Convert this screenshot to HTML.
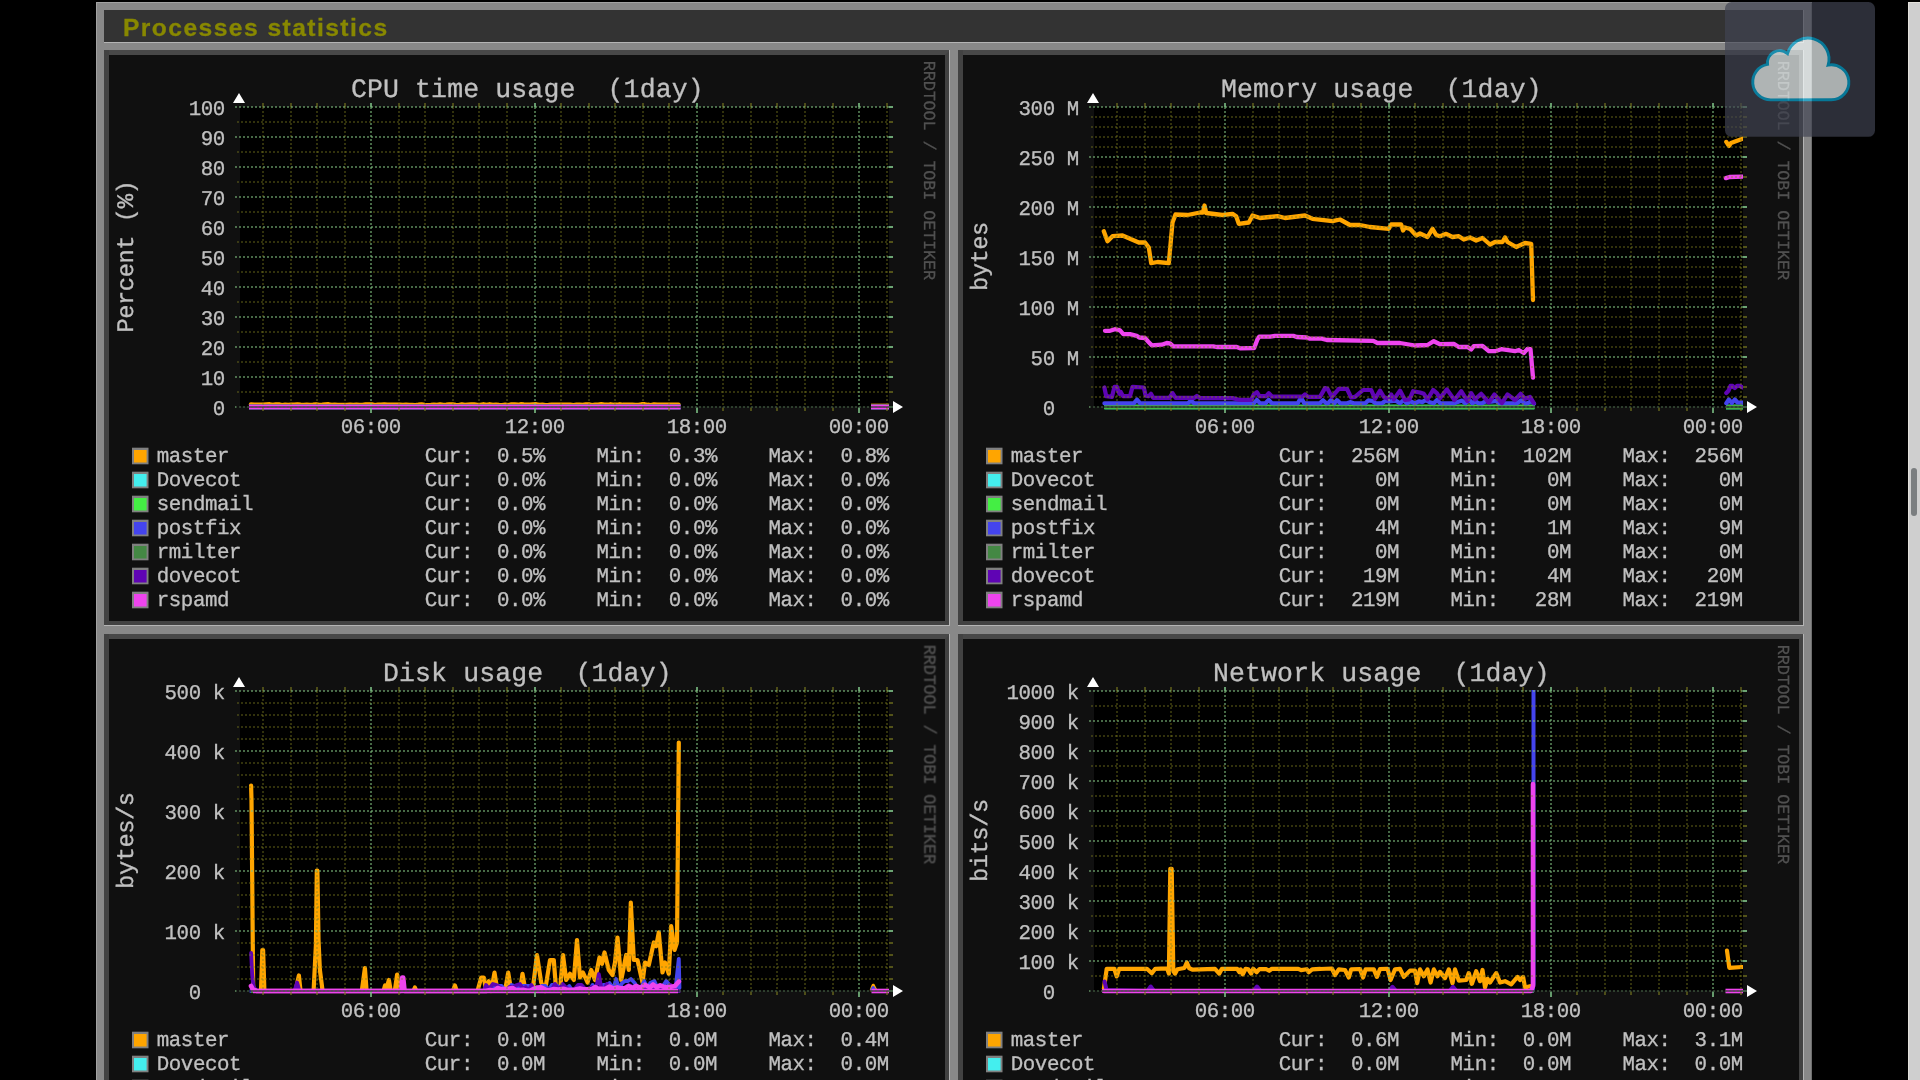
<!DOCTYPE html>
<html><head><meta charset="utf-8"><title>Processes statistics</title>
<style>
html,body{margin:0;padding:0;background:#000;width:1920px;height:1080px;overflow:hidden}
body{position:relative;font-family:"Liberation Sans", sans-serif}
#frame{position:absolute;left:96px;top:2px;width:1716px;height:1078px;background:#888;box-shadow:inset 1px 1px 0 #a2a2a2,inset -1px 0 0 #6e6e6e}
#tbar{position:absolute;left:104px;top:10px;width:1699px;height:32px;background:#333;border-right:1px solid #b4b4b4;border-bottom:1px solid #b4b4b4}
#ttl{position:absolute;left:122.8px;top:10.5px;will-change:transform;height:32px;line-height:32px;font:bold 24.6px "Liberation Sans", sans-serif;line-height:33px;color:#888800;white-space:nowrap;letter-spacing:1.45px;-webkit-text-stroke:.3px #888800}
svg{position:absolute;left:0;top:0;will-change:transform}
svg text{font-family:"Liberation Mono", monospace;white-space:pre;text-rendering:geometricPrecision;stroke-width:.3px;paint-order:stroke fill}
#sb{position:absolute;left:1908px;top:2px;width:12px;height:1078px;background:#cfcfcf;box-shadow:inset 1px 1px 0 #e4e2dc}
#th{position:absolute;left:1911px;top:468px;width:6px;height:48px;border-radius:3px;background:#7b7e80}
</style></head><body>
<div id="frame"></div>
<div id="tbar"></div>
<div id="ttl">Processes statistics</div>
<svg width="1920" height="1080" viewBox="0 0 1920 1080">
<defs><clipPath id="cv"><rect x="240" y="106" width="649" height="304"/></clipPath></defs>
<g transform="translate(0 0)">
<rect x="104" y="50" width="846" height="576" fill="#424242"/>
<path d="M104 50H950L945 55H109V50Z" fill="#484848"/>
<rect x="949" y="50" width="1" height="576" fill="#b4b4b4"/>
<rect x="104" y="625" width="846" height="1" fill="#b4b4b4"/>
<rect x="109" y="55" width="836" height="566" fill="#101010"/>
<rect x="240" y="107" width="649" height="300" fill="#000"/>
<g clip-path="url(#cv)">
<polyline points="251.0,404.6 254.1,404.8 257.2,404.7 260.3,404.9 263.4,404.9 266.5,404.5 269.6,404.4 272.7,405.1 275.8,404.6 278.9,404.6 282.0,405.2 285.1,404.8 288.2,405.1 291.3,404.8 294.4,404.9 297.5,404.5 300.6,404.9 303.7,405.1 306.8,404.8 309.9,405.0 313.0,404.9 316.1,404.5 319.2,405.0 322.3,404.9 325.4,404.6 328.5,404.4 331.6,405.1 334.7,404.8 337.8,405.0 340.9,405.1 344.0,405.0 347.1,405.1 350.2,404.7 353.3,405.0 356.4,404.8 359.5,405.1 362.6,405.1 365.7,404.5 368.8,404.5 371.9,404.6 375.0,405.2 378.1,404.7 381.2,404.9 384.3,404.6 387.4,404.8 390.5,404.7 393.6,404.7 396.7,404.9 399.8,404.9 402.9,405.1 406.0,404.9 409.1,405.1 412.2,405.1 415.3,405.2 418.4,404.9 421.5,404.5 424.6,405.1 427.7,405.2 430.8,405.1 433.9,404.9 437.0,405.0 440.1,404.6 443.2,405.1 446.3,404.9 449.4,404.6 452.5,404.5 455.6,405.1 458.7,405.2 461.8,404.5 464.9,405.0 468.0,404.7 471.1,404.5 474.2,404.6 477.3,405.0 480.4,405.1 483.5,404.4 486.6,404.9 489.7,404.4 492.8,405.0 495.9,404.7 499.0,405.1 502.1,405.2 505.2,404.8 508.3,405.2 511.4,404.6 514.5,404.5 517.6,404.9 520.7,404.4 523.8,404.6 526.9,404.7 530.0,404.9 533.1,404.5 536.2,404.4 539.3,405.1 542.4,404.7 545.5,405.2 548.6,405.1 551.7,404.7 554.8,404.8 557.9,404.8 561.0,404.9 564.1,404.9 567.2,404.8 570.3,404.9 573.4,405.2 576.5,404.8 579.6,404.7 582.7,405.0 585.8,404.6 588.9,404.6 592.0,405.2 595.1,404.8 598.2,404.8 601.3,404.4 604.4,404.7 607.5,404.9 610.6,404.4 613.7,404.9 616.8,404.9 619.9,404.4 623.0,404.9 626.1,404.8 629.2,404.9 632.3,404.7 635.4,405.0 638.5,405.0 641.6,404.4 644.7,404.4 647.8,404.9 650.9,405.2 654.0,404.6 657.1,404.8 660.2,404.9 663.3,404.7 666.4,404.7 669.5,404.7 672.6,404.7 675.7,404.9 678.5,404.8" fill="none" stroke="#FFA500" stroke-width="4.6" stroke-linejoin="round" stroke-linecap="round"/>
<polyline points="871.0,405.9 892.0,405.9" fill="none" stroke="#FFA500" stroke-width="4.5" stroke-linejoin="round" stroke-linecap="butt"/>
<polyline points="249.0,407.1 680.5,407.1" fill="none" stroke="#44EEEE" stroke-width="4.5" stroke-linejoin="round" stroke-linecap="butt"/>
<polyline points="871.0,407.0 892.0,407.0" fill="none" stroke="#44EEEE" stroke-width="4.5" stroke-linejoin="round" stroke-linecap="butt"/>
<polyline points="249.0,407.1 680.5,407.1" fill="none" stroke="#44EE44" stroke-width="4.5" stroke-linejoin="round" stroke-linecap="butt"/>
<polyline points="871.0,407.0 892.0,407.0" fill="none" stroke="#44EE44" stroke-width="4.5" stroke-linejoin="round" stroke-linecap="butt"/>
<polyline points="249.0,407.1 680.5,407.1" fill="none" stroke="#4444EE" stroke-width="4.5" stroke-linejoin="round" stroke-linecap="butt"/>
<polyline points="871.0,407.0 892.0,407.0" fill="none" stroke="#4444EE" stroke-width="4.5" stroke-linejoin="round" stroke-linecap="butt"/>
<polyline points="249.0,407.1 680.5,407.1" fill="none" stroke="#448844" stroke-width="4.5" stroke-linejoin="round" stroke-linecap="butt"/>
<polyline points="871.0,407.0 892.0,407.0" fill="none" stroke="#448844" stroke-width="4.5" stroke-linejoin="round" stroke-linecap="butt"/>
<polyline points="249.0,407.1 680.5,407.1" fill="none" stroke="#5F04B4" stroke-width="4.5" stroke-linejoin="round" stroke-linecap="butt"/>
<polyline points="871.0,407.0 892.0,407.0" fill="none" stroke="#5F04B4" stroke-width="4.5" stroke-linejoin="round" stroke-linecap="butt"/>
<polyline points="249.0,407.1 680.5,407.1" fill="none" stroke="#EE44EE" stroke-width="4.5" stroke-linejoin="round" stroke-linecap="butt"/>
<polyline points="871.0,407.0 892.0,407.0" fill="none" stroke="#EE44EE" stroke-width="4.5" stroke-linejoin="round" stroke-linecap="butt"/>
</g>
<g shape-rendering="crispEdges" stroke-width="2">
<path d="M237 122H889" stroke="rgba(128,128,32,0.38)" stroke-dasharray="2 2"/>
<path d="M889 122H893" stroke="#80801f" stroke-opacity=".6"/>
<path d="M237 152H889" stroke="rgba(128,128,32,0.38)" stroke-dasharray="2 2"/>
<path d="M889 152H893" stroke="#80801f" stroke-opacity=".6"/>
<path d="M237 182H889" stroke="rgba(128,128,32,0.38)" stroke-dasharray="2 2"/>
<path d="M889 182H893" stroke="#80801f" stroke-opacity=".6"/>
<path d="M237 212H889" stroke="rgba(128,128,32,0.38)" stroke-dasharray="2 2"/>
<path d="M889 212H893" stroke="#80801f" stroke-opacity=".6"/>
<path d="M237 242H889" stroke="rgba(128,128,32,0.38)" stroke-dasharray="2 2"/>
<path d="M889 242H893" stroke="#80801f" stroke-opacity=".6"/>
<path d="M237 272H889" stroke="rgba(128,128,32,0.38)" stroke-dasharray="2 2"/>
<path d="M889 272H893" stroke="#80801f" stroke-opacity=".6"/>
<path d="M237 302H889" stroke="rgba(128,128,32,0.38)" stroke-dasharray="2 2"/>
<path d="M889 302H893" stroke="#80801f" stroke-opacity=".6"/>
<path d="M237 332H889" stroke="rgba(128,128,32,0.38)" stroke-dasharray="2 2"/>
<path d="M889 332H893" stroke="#80801f" stroke-opacity=".6"/>
<path d="M237 362H889" stroke="rgba(128,128,32,0.38)" stroke-dasharray="2 2"/>
<path d="M889 362H893" stroke="#80801f" stroke-opacity=".6"/>
<path d="M237 392H889" stroke="rgba(128,128,32,0.38)" stroke-dasharray="2 2"/>
<path d="M889 392H893" stroke="#80801f" stroke-opacity=".6"/>
<path d="M263 107V407" stroke="rgba(128,128,32,0.38)" stroke-dasharray="2 2"/>
<path d="M263 103V107M263 407V411" stroke="#80801f" stroke-opacity="0.55"/>
<path d="M291 107V407" stroke="rgba(128,128,32,0.38)" stroke-dasharray="2 2"/>
<path d="M291 103V107M291 407V411" stroke="#80801f" stroke-opacity="0.55"/>
<path d="M317 107V407" stroke="rgba(128,128,32,0.38)" stroke-dasharray="2 2"/>
<path d="M317 103V107M317 407V411" stroke="#80801f" stroke-opacity="0.55"/>
<path d="M345 107V407" stroke="rgba(128,128,32,0.38)" stroke-dasharray="2 2"/>
<path d="M345 103V107M345 407V411" stroke="#80801f" stroke-opacity="0.55"/>
<path d="M371 107V407" stroke="rgba(128,192,128,0.55)" stroke-dasharray="2 2"/>
<path d="M371 103V107M371 407V413" stroke="#7cbf85" stroke-opacity="0.8"/>
<path d="M399 107V407" stroke="rgba(128,128,32,0.38)" stroke-dasharray="2 2"/>
<path d="M399 103V107M399 407V411" stroke="#80801f" stroke-opacity="0.55"/>
<path d="M425 107V407" stroke="rgba(128,128,32,0.38)" stroke-dasharray="2 2"/>
<path d="M425 103V107M425 407V411" stroke="#80801f" stroke-opacity="0.55"/>
<path d="M453 107V407" stroke="rgba(128,128,32,0.38)" stroke-dasharray="2 2"/>
<path d="M453 103V107M453 407V411" stroke="#80801f" stroke-opacity="0.55"/>
<path d="M479 107V407" stroke="rgba(128,128,32,0.38)" stroke-dasharray="2 2"/>
<path d="M479 103V107M479 407V411" stroke="#80801f" stroke-opacity="0.55"/>
<path d="M507 107V407" stroke="rgba(128,128,32,0.38)" stroke-dasharray="2 2"/>
<path d="M507 103V107M507 407V411" stroke="#80801f" stroke-opacity="0.55"/>
<path d="M535 107V407" stroke="rgba(128,192,128,0.55)" stroke-dasharray="2 2"/>
<path d="M535 103V107M535 407V413" stroke="#7cbf85" stroke-opacity="0.8"/>
<path d="M561 107V407" stroke="rgba(128,128,32,0.38)" stroke-dasharray="2 2"/>
<path d="M561 103V107M561 407V411" stroke="#80801f" stroke-opacity="0.55"/>
<path d="M589 107V407" stroke="rgba(128,128,32,0.38)" stroke-dasharray="2 2"/>
<path d="M589 103V107M589 407V411" stroke="#80801f" stroke-opacity="0.55"/>
<path d="M615 107V407" stroke="rgba(128,128,32,0.38)" stroke-dasharray="2 2"/>
<path d="M615 103V107M615 407V411" stroke="#80801f" stroke-opacity="0.55"/>
<path d="M643 107V407" stroke="rgba(128,128,32,0.38)" stroke-dasharray="2 2"/>
<path d="M643 103V107M643 407V411" stroke="#80801f" stroke-opacity="0.55"/>
<path d="M669 107V407" stroke="rgba(128,128,32,0.38)" stroke-dasharray="2 2"/>
<path d="M669 103V107M669 407V411" stroke="#80801f" stroke-opacity="0.55"/>
<path d="M697 107V407" stroke="rgba(128,192,128,0.55)" stroke-dasharray="2 2"/>
<path d="M697 103V107M697 407V413" stroke="#7cbf85" stroke-opacity="0.8"/>
<path d="M723 107V407" stroke="rgba(128,128,32,0.38)" stroke-dasharray="2 2"/>
<path d="M723 103V107M723 407V411" stroke="#80801f" stroke-opacity="0.55"/>
<path d="M751 107V407" stroke="rgba(128,128,32,0.38)" stroke-dasharray="2 2"/>
<path d="M751 103V107M751 407V411" stroke="#80801f" stroke-opacity="0.55"/>
<path d="M777 107V407" stroke="rgba(128,128,32,0.38)" stroke-dasharray="2 2"/>
<path d="M777 103V107M777 407V411" stroke="#80801f" stroke-opacity="0.55"/>
<path d="M805 107V407" stroke="rgba(128,128,32,0.38)" stroke-dasharray="2 2"/>
<path d="M805 103V107M805 407V411" stroke="#80801f" stroke-opacity="0.55"/>
<path d="M833 107V407" stroke="rgba(128,128,32,0.38)" stroke-dasharray="2 2"/>
<path d="M833 103V107M833 407V411" stroke="#80801f" stroke-opacity="0.55"/>
<path d="M859 107V407" stroke="rgba(128,192,128,0.55)" stroke-dasharray="2 2"/>
<path d="M859 103V107M859 407V413" stroke="#7cbf85" stroke-opacity="0.8"/>
<path d="M887 107V407" stroke="rgba(128,128,32,0.38)" stroke-dasharray="2 2"/>
<path d="M887 103V107M887 407V411" stroke="#80801f" stroke-opacity="0.55"/>
<path d="M235 107H889" stroke="rgba(128,192,128,0.55)" stroke-dasharray="2 2"/>
<path d="M889 107H893" stroke="#7cbf85" stroke-opacity=".85"/>
<path d="M235 137H889" stroke="rgba(128,192,128,0.55)" stroke-dasharray="2 2"/>
<path d="M889 137H893" stroke="#7cbf85" stroke-opacity=".85"/>
<path d="M235 167H889" stroke="rgba(128,192,128,0.55)" stroke-dasharray="2 2"/>
<path d="M889 167H893" stroke="#7cbf85" stroke-opacity=".85"/>
<path d="M235 197H889" stroke="rgba(128,192,128,0.55)" stroke-dasharray="2 2"/>
<path d="M889 197H893" stroke="#7cbf85" stroke-opacity=".85"/>
<path d="M235 227H889" stroke="rgba(128,192,128,0.55)" stroke-dasharray="2 2"/>
<path d="M889 227H893" stroke="#7cbf85" stroke-opacity=".85"/>
<path d="M235 257H889" stroke="rgba(128,192,128,0.55)" stroke-dasharray="2 2"/>
<path d="M889 257H893" stroke="#7cbf85" stroke-opacity=".85"/>
<path d="M235 287H889" stroke="rgba(128,192,128,0.55)" stroke-dasharray="2 2"/>
<path d="M889 287H893" stroke="#7cbf85" stroke-opacity=".85"/>
<path d="M235 317H889" stroke="rgba(128,192,128,0.55)" stroke-dasharray="2 2"/>
<path d="M889 317H893" stroke="#7cbf85" stroke-opacity=".85"/>
<path d="M235 347H889" stroke="rgba(128,192,128,0.55)" stroke-dasharray="2 2"/>
<path d="M889 347H893" stroke="#7cbf85" stroke-opacity=".85"/>
<path d="M235 377H889" stroke="rgba(128,192,128,0.55)" stroke-dasharray="2 2"/>
<path d="M889 377H893" stroke="#7cbf85" stroke-opacity=".85"/>
<path d="M235 407H889" stroke="rgba(128,192,128,0.55)" stroke-dasharray="2 2"/>
<path d="M889 407H893" stroke="#7cbf85" stroke-opacity=".85"/>
</g>
<rect x="236" y="406" width="657" height="2" fill="#101010" fill-opacity=".5"/>
<path d="M233 103H245L239 93Z M893 401V413L903 407Z" fill="#fff"/>
<text x="350.93" y="97.40" font-size="26.50" letter-spacing="0.137" fill="#c0c0c0" stroke="#c0c0c0">CPU time usage  (1day)</text>
<text transform="translate(133.00 256.40) rotate(-90)" x="-76.12" y="0" font-size="23.74" letter-spacing="-0.449" fill="#c0c0c0" stroke="#c0c0c0">Percent (%)</text>
<text transform="translate(924.40 170.50) rotate(90)" x="-109.76" y="0" font-size="16.90" letter-spacing="-0.172" fill="#505050" stroke="#505050">RRDTOOL / TOBI OETIKER</text>
<text x="188.66" y="115.30" font-size="20.80" letter-spacing="-0.442" fill="#c0c0c0" stroke="#c0c0c0">100</text>
<text x="200.70" y="145.30" font-size="20.80" letter-spacing="-0.442" fill="#c0c0c0" stroke="#c0c0c0">90</text>
<text x="200.70" y="175.30" font-size="20.80" letter-spacing="-0.442" fill="#c0c0c0" stroke="#c0c0c0">80</text>
<text x="200.70" y="205.30" font-size="20.80" letter-spacing="-0.442" fill="#c0c0c0" stroke="#c0c0c0">70</text>
<text x="200.70" y="235.30" font-size="20.80" letter-spacing="-0.442" fill="#c0c0c0" stroke="#c0c0c0">60</text>
<text x="200.70" y="265.30" font-size="20.80" letter-spacing="-0.442" fill="#c0c0c0" stroke="#c0c0c0">50</text>
<text x="200.70" y="295.30" font-size="20.80" letter-spacing="-0.442" fill="#c0c0c0" stroke="#c0c0c0">40</text>
<text x="200.70" y="325.30" font-size="20.80" letter-spacing="-0.442" fill="#c0c0c0" stroke="#c0c0c0">30</text>
<text x="200.70" y="355.30" font-size="20.80" letter-spacing="-0.442" fill="#c0c0c0" stroke="#c0c0c0">20</text>
<text x="200.70" y="385.30" font-size="20.80" letter-spacing="-0.442" fill="#c0c0c0" stroke="#c0c0c0">10</text>
<text x="212.74" y="415.30" font-size="20.80" letter-spacing="-0.442" fill="#c0c0c0" stroke="#c0c0c0">0</text>
<text x="340.68" y="432.90" font-size="20.80" letter-spacing="-0.442" fill="#c0c0c0" stroke="#c0c0c0">06:00</text>
<text x="504.68" y="432.90" font-size="20.80" letter-spacing="-0.442" fill="#c0c0c0" stroke="#c0c0c0">12:00</text>
<text x="666.68" y="432.90" font-size="20.80" letter-spacing="-0.442" fill="#c0c0c0" stroke="#c0c0c0">18:00</text>
<text x="828.68" y="432.90" font-size="20.80" letter-spacing="-0.442" fill="#c0c0c0" stroke="#c0c0c0">00:00</text>
<rect x="132" y="447.7" width="16.5" height="16.6" fill="#808080"/>
<rect x="134" y="450" width="12.6" height="12.5" fill="#FFA500"/>
<text x="156.78" y="462.20" font-size="20.80" letter-spacing="-0.442" fill="#c0c0c0" stroke="#c0c0c0">master</text>
<text x="424.78" y="462.20" font-size="20.80" letter-spacing="-0.442" fill="#c0c0c0" stroke="#c0c0c0">Cur:  0.5%</text>
<text x="596.58" y="462.20" font-size="20.80" letter-spacing="-0.442" fill="#c0c0c0" stroke="#c0c0c0">Min:  0.3%</text>
<text x="768.38" y="462.20" font-size="20.80" letter-spacing="-0.442" fill="#c0c0c0" stroke="#c0c0c0">Max:  0.8%</text>
<rect x="132" y="471.7" width="16.5" height="16.6" fill="#808080"/>
<rect x="134" y="474" width="12.6" height="12.5" fill="#44EEEE"/>
<text x="156.78" y="486.20" font-size="20.80" letter-spacing="-0.442" fill="#c0c0c0" stroke="#c0c0c0">Dovecot</text>
<text x="424.78" y="486.20" font-size="20.80" letter-spacing="-0.442" fill="#c0c0c0" stroke="#c0c0c0">Cur:  0.0%</text>
<text x="596.58" y="486.20" font-size="20.80" letter-spacing="-0.442" fill="#c0c0c0" stroke="#c0c0c0">Min:  0.0%</text>
<text x="768.38" y="486.20" font-size="20.80" letter-spacing="-0.442" fill="#c0c0c0" stroke="#c0c0c0">Max:  0.0%</text>
<rect x="132" y="495.7" width="16.5" height="16.6" fill="#808080"/>
<rect x="134" y="498" width="12.6" height="12.5" fill="#44EE44"/>
<text x="156.78" y="510.20" font-size="20.80" letter-spacing="-0.442" fill="#c0c0c0" stroke="#c0c0c0">sendmail</text>
<text x="424.78" y="510.20" font-size="20.80" letter-spacing="-0.442" fill="#c0c0c0" stroke="#c0c0c0">Cur:  0.0%</text>
<text x="596.58" y="510.20" font-size="20.80" letter-spacing="-0.442" fill="#c0c0c0" stroke="#c0c0c0">Min:  0.0%</text>
<text x="768.38" y="510.20" font-size="20.80" letter-spacing="-0.442" fill="#c0c0c0" stroke="#c0c0c0">Max:  0.0%</text>
<rect x="132" y="519.7" width="16.5" height="16.6" fill="#808080"/>
<rect x="134" y="522" width="12.6" height="12.5" fill="#4444EE"/>
<text x="156.78" y="534.20" font-size="20.80" letter-spacing="-0.442" fill="#c0c0c0" stroke="#c0c0c0">postfix</text>
<text x="424.78" y="534.20" font-size="20.80" letter-spacing="-0.442" fill="#c0c0c0" stroke="#c0c0c0">Cur:  0.0%</text>
<text x="596.58" y="534.20" font-size="20.80" letter-spacing="-0.442" fill="#c0c0c0" stroke="#c0c0c0">Min:  0.0%</text>
<text x="768.38" y="534.20" font-size="20.80" letter-spacing="-0.442" fill="#c0c0c0" stroke="#c0c0c0">Max:  0.0%</text>
<rect x="132" y="543.7" width="16.5" height="16.6" fill="#808080"/>
<rect x="134" y="546" width="12.6" height="12.5" fill="#448844"/>
<text x="156.78" y="558.20" font-size="20.80" letter-spacing="-0.442" fill="#c0c0c0" stroke="#c0c0c0">rmilter</text>
<text x="424.78" y="558.20" font-size="20.80" letter-spacing="-0.442" fill="#c0c0c0" stroke="#c0c0c0">Cur:  0.0%</text>
<text x="596.58" y="558.20" font-size="20.80" letter-spacing="-0.442" fill="#c0c0c0" stroke="#c0c0c0">Min:  0.0%</text>
<text x="768.38" y="558.20" font-size="20.80" letter-spacing="-0.442" fill="#c0c0c0" stroke="#c0c0c0">Max:  0.0%</text>
<rect x="132" y="567.7" width="16.5" height="16.6" fill="#808080"/>
<rect x="134" y="570" width="12.6" height="12.5" fill="#5F04B4"/>
<text x="156.78" y="582.20" font-size="20.80" letter-spacing="-0.442" fill="#c0c0c0" stroke="#c0c0c0">dovecot</text>
<text x="424.78" y="582.20" font-size="20.80" letter-spacing="-0.442" fill="#c0c0c0" stroke="#c0c0c0">Cur:  0.0%</text>
<text x="596.58" y="582.20" font-size="20.80" letter-spacing="-0.442" fill="#c0c0c0" stroke="#c0c0c0">Min:  0.0%</text>
<text x="768.38" y="582.20" font-size="20.80" letter-spacing="-0.442" fill="#c0c0c0" stroke="#c0c0c0">Max:  0.0%</text>
<rect x="132" y="591.7" width="16.5" height="16.6" fill="#808080"/>
<rect x="134" y="594" width="12.6" height="12.5" fill="#EE44EE"/>
<text x="156.78" y="606.20" font-size="20.80" letter-spacing="-0.442" fill="#c0c0c0" stroke="#c0c0c0">rspamd</text>
<text x="424.78" y="606.20" font-size="20.80" letter-spacing="-0.442" fill="#c0c0c0" stroke="#c0c0c0">Cur:  0.0%</text>
<text x="596.58" y="606.20" font-size="20.80" letter-spacing="-0.442" fill="#c0c0c0" stroke="#c0c0c0">Min:  0.0%</text>
<text x="768.38" y="606.20" font-size="20.80" letter-spacing="-0.442" fill="#c0c0c0" stroke="#c0c0c0">Max:  0.0%</text>
</g>
<g transform="translate(854 0)">
<rect x="104" y="50" width="846" height="576" fill="#424242"/>
<path d="M104 50H950L945 55H109V50Z" fill="#484848"/>
<rect x="949" y="50" width="1" height="576" fill="#b4b4b4"/>
<rect x="104" y="625" width="846" height="1" fill="#b4b4b4"/>
<rect x="109" y="55" width="836" height="566" fill="#101010"/>
<rect x="240" y="107" width="649" height="300" fill="#000"/>
<g clip-path="url(#cv)">
<polyline points="249.8,231.2 253.5,241.2 258.5,236.2 268.5,235.5 284.8,242.5 291.0,242.5 294.8,247.5 297.2,263.2 303.5,262.0 314.8,263.2 318.5,222.5 321.5,214.5 333.5,215.0 346.0,212.5 349.0,212.5 350.5,205.5 352.2,213.0 368.5,215.0 378.5,213.8 382.2,216.2 384.8,223.8 394.8,222.5 398.5,215.5 406.0,218.0 423.5,216.2 431.0,218.0 451.0,215.5 458.5,218.8 478.5,221.2 486.0,219.5 496.0,225.0 506.0,225.0 516.0,227.0 534.8,228.8 537.2,224.5 547.2,224.5 549.0,230.5 551.0,227.5 556.0,228.8 562.2,235.5 566.0,233.5 573.5,237.0 578.5,228.8 582.2,235.0 586.0,236.2 592.2,233.8 598.5,237.0 604.8,236.2 609.8,239.5 616.0,237.5 622.2,240.5 628.5,238.0 636.0,244.5 641.0,242.0 648.5,242.0 651.0,237.5 653.5,242.0 662.2,247.0 671.0,243.0 677.2,243.8 679.0,300.0" fill="none" stroke="#FFA500" stroke-width="4.3" stroke-linejoin="round" stroke-linecap="round"/>
<polyline points="872.3,141.9 874.9,145.9 877.0,143.0 887.9,138.9 892.0,137.6" fill="none" stroke="#FFA500" stroke-width="4.3" stroke-linejoin="round" stroke-linecap="round"/>
<polyline points="250.4,407.0 680.4,407.0" fill="none" stroke="#44EEEE" stroke-width="4.6" stroke-linejoin="round" stroke-linecap="butt"/>
<polyline points="872.0,407.0 892.0,407.0" fill="none" stroke="#44EEEE" stroke-width="4.6" stroke-linejoin="round" stroke-linecap="butt"/>
<polyline points="250.4,407.0 680.4,407.0" fill="none" stroke="#44EE44" stroke-width="4.6" stroke-linejoin="round" stroke-linecap="butt"/>
<polyline points="872.0,407.0 892.0,407.0" fill="none" stroke="#44EE44" stroke-width="4.6" stroke-linejoin="round" stroke-linecap="butt"/>
<polyline points="250.4,403.3 279.8,403.3 283.0,399.6 286.2,403.3 333.8,403.3 337.0,400.6 340.2,403.3 399.7,403.3 402.9,399.8 406.1,403.3 411.5,403.3 414.8,399.8 418.0,403.3 443.8,403.3 447.0,397.5 450.2,403.3 465.8,403.3 469.0,400.2 472.2,403.3 474.0,403.3 476.8,400.2 480.4,403.3 483.0,400.1 486.4,403.3 489.0,403.3 493.2,403.3 496.1,402.1 499.8,403.3 504.2,403.3 508.5,403.3 511.3,403.3 514.4,400.4 518.0,400.8 521.6,403.3 524.2,403.3 528.1,403.3 531.2,401.0 534.3,401.5 537.3,401.2 541.6,400.6 546.0,403.3 549.4,400.3 552.8,403.3 556.7,401.3 560.9,403.3 564.8,401.3 568.2,402.1 571.7,400.1 575.6,402.2 579.7,403.3 583.0,400.0 586.4,403.3 589.2,403.3 593.2,403.3 596.2,403.3 600.4,403.3 603.8,401.9 608.0,400.6 611.3,403.3 615.6,400.3 618.4,403.3 621.4,401.3 624.4,403.3 627.8,403.3 631.4,401.5 634.9,401.5 637.5,401.7 641.8,400.9 645.1,403.3 648.8,403.3 651.5,403.3 654.3,403.3 656.9,403.3 659.7,403.3 662.9,403.3 667.2,400.3 670.2,403.3 673.4,403.3 677.6,401.0 680.0,403.6" fill="none" stroke="#4444EE" stroke-width="4.2" stroke-linejoin="round" stroke-linecap="round"/>
<polyline points="872.3,403.3 874.9,399.5 877.8,403.0 880.8,399.5 883.5,402.5 892.0,402.8" fill="none" stroke="#4444EE" stroke-width="4.2" stroke-linejoin="round" stroke-linecap="round"/>
<polyline points="250.4,407.0 680.4,407.0" fill="none" stroke="#448844" stroke-width="3.2" stroke-linejoin="round" stroke-linecap="butt"/>
<polyline points="872.0,407.0 892.0,407.0" fill="none" stroke="#448844" stroke-width="3.2" stroke-linejoin="round" stroke-linecap="butt"/>
<polyline points="250.4,387.5 252.2,396.2 257.9,396.9 260.4,386.9 262.9,386.9 265.4,393.8 266.6,391.9 269.1,396.2 276.0,396.2 278.5,386.9 289.8,387.5 291.6,395.6 294.8,396.2 297.0,393.8 299.1,397.8 315.4,397.8 318.5,393.1 321.6,397.8 340.4,397.8 342.9,396.0 346.0,398.1 378.5,398.1 384.8,399.8 397.2,399.8 399.8,394.4 402.9,392.2 405.4,396.2 412.2,396.2 414.8,393.1 417.9,396.5 448.5,396.5 451.0,394.4 454.1,396.9 464.0,396.9 466.0,396.9 471.0,388.1 473.5,388.8 477.9,396.9 484.8,388.8 492.9,388.8 497.2,397.5 501.0,396.9 509.1,390.0 517.2,390.0 521.0,398.8 526.0,390.6 529.8,396.9 534.1,398.8 537.2,394.4 539.8,399.4 546.0,390.6 551.0,400.0 555.4,399.4 559.1,391.2 566.0,392.5 569.8,393.8 573.5,399.4 579.1,390.0 582.9,393.1 586.0,398.1 592.9,389.4 600.4,400.0 607.2,391.2 613.5,401.2 617.2,393.1 621.0,399.4 627.2,393.8 634.8,402.5 640.4,394.4 647.9,403.1 653.5,394.4 661.0,400.0 666.6,393.8 671.0,398.8 676.0,396.9 679.8,403.1" fill="none" stroke="#5F04B4" stroke-width="4.2" stroke-linejoin="round" stroke-linecap="round"/>
<polyline points="872.3,393.0 874.5,390.7 876.4,385.9 878.6,385.9 880.8,388.1 883.0,385.9 886.0,385.9 888.6,387.4 892.0,387.4" fill="none" stroke="#5F04B4" stroke-width="4.2" stroke-linejoin="round" stroke-linecap="round"/>
<polyline points="251.0,330.8 256.0,330.8 261.0,329.2 266.0,330.3 269.3,334.2 276.0,334.2 282.7,335.8 285.2,337.5 291.0,338.0 294.3,341.7 297.7,345.3 307.7,344.7 312.7,343.0 316.0,343.3 319.3,346.3 359.3,346.3 362.7,347.0 382.7,347.0 386.0,348.3 400.2,348.0 403.5,339.2 405.2,336.7 416.0,336.7 421.0,335.8 439.3,335.8 442.7,337.0 452.7,337.5 456.0,338.7 467.7,338.7 472.7,340.0 519.3,340.8 523.5,343.0 546.0,343.0 561.0,345.5 573.5,345.0 579.8,341.2 586.0,344.2 599.8,343.8 604.8,347.0 613.5,347.0 617.2,349.5 619.8,346.2 628.5,345.8 634.8,351.2 641.0,351.2 647.2,349.2 661.0,351.2 664.8,350.0 669.8,353.0 673.5,348.8 676.5,349.2 679.0,377.5" fill="none" stroke="#EE44EE" stroke-width="4.3" stroke-linejoin="round" stroke-linecap="round"/>
<polyline points="871.9,178.1 875.6,177.0 888.2,176.7 892.0,176.7" fill="none" stroke="#EE44EE" stroke-width="4.3" stroke-linejoin="round" stroke-linecap="round"/>
</g>
<g shape-rendering="crispEdges" stroke-width="2">
<path d="M237 117H889" stroke="rgba(128,128,32,0.38)" stroke-dasharray="2 2"/>
<path d="M889 117H893" stroke="#80801f" stroke-opacity=".6"/>
<path d="M237 127H889" stroke="rgba(128,128,32,0.38)" stroke-dasharray="2 2"/>
<path d="M889 127H893" stroke="#80801f" stroke-opacity=".6"/>
<path d="M237 137H889" stroke="rgba(128,128,32,0.38)" stroke-dasharray="2 2"/>
<path d="M889 137H893" stroke="#80801f" stroke-opacity=".6"/>
<path d="M237 147H889" stroke="rgba(128,128,32,0.38)" stroke-dasharray="2 2"/>
<path d="M889 147H893" stroke="#80801f" stroke-opacity=".6"/>
<path d="M237 167H889" stroke="rgba(128,128,32,0.38)" stroke-dasharray="2 2"/>
<path d="M889 167H893" stroke="#80801f" stroke-opacity=".6"/>
<path d="M237 177H889" stroke="rgba(128,128,32,0.38)" stroke-dasharray="2 2"/>
<path d="M889 177H893" stroke="#80801f" stroke-opacity=".6"/>
<path d="M237 187H889" stroke="rgba(128,128,32,0.38)" stroke-dasharray="2 2"/>
<path d="M889 187H893" stroke="#80801f" stroke-opacity=".6"/>
<path d="M237 197H889" stroke="rgba(128,128,32,0.38)" stroke-dasharray="2 2"/>
<path d="M889 197H893" stroke="#80801f" stroke-opacity=".6"/>
<path d="M237 217H889" stroke="rgba(128,128,32,0.38)" stroke-dasharray="2 2"/>
<path d="M889 217H893" stroke="#80801f" stroke-opacity=".6"/>
<path d="M237 227H889" stroke="rgba(128,128,32,0.38)" stroke-dasharray="2 2"/>
<path d="M889 227H893" stroke="#80801f" stroke-opacity=".6"/>
<path d="M237 237H889" stroke="rgba(128,128,32,0.38)" stroke-dasharray="2 2"/>
<path d="M889 237H893" stroke="#80801f" stroke-opacity=".6"/>
<path d="M237 247H889" stroke="rgba(128,128,32,0.38)" stroke-dasharray="2 2"/>
<path d="M889 247H893" stroke="#80801f" stroke-opacity=".6"/>
<path d="M237 267H889" stroke="rgba(128,128,32,0.38)" stroke-dasharray="2 2"/>
<path d="M889 267H893" stroke="#80801f" stroke-opacity=".6"/>
<path d="M237 277H889" stroke="rgba(128,128,32,0.38)" stroke-dasharray="2 2"/>
<path d="M889 277H893" stroke="#80801f" stroke-opacity=".6"/>
<path d="M237 287H889" stroke="rgba(128,128,32,0.38)" stroke-dasharray="2 2"/>
<path d="M889 287H893" stroke="#80801f" stroke-opacity=".6"/>
<path d="M237 297H889" stroke="rgba(128,128,32,0.38)" stroke-dasharray="2 2"/>
<path d="M889 297H893" stroke="#80801f" stroke-opacity=".6"/>
<path d="M237 317H889" stroke="rgba(128,128,32,0.38)" stroke-dasharray="2 2"/>
<path d="M889 317H893" stroke="#80801f" stroke-opacity=".6"/>
<path d="M237 327H889" stroke="rgba(128,128,32,0.38)" stroke-dasharray="2 2"/>
<path d="M889 327H893" stroke="#80801f" stroke-opacity=".6"/>
<path d="M237 337H889" stroke="rgba(128,128,32,0.38)" stroke-dasharray="2 2"/>
<path d="M889 337H893" stroke="#80801f" stroke-opacity=".6"/>
<path d="M237 347H889" stroke="rgba(128,128,32,0.38)" stroke-dasharray="2 2"/>
<path d="M889 347H893" stroke="#80801f" stroke-opacity=".6"/>
<path d="M237 367H889" stroke="rgba(128,128,32,0.38)" stroke-dasharray="2 2"/>
<path d="M889 367H893" stroke="#80801f" stroke-opacity=".6"/>
<path d="M237 377H889" stroke="rgba(128,128,32,0.38)" stroke-dasharray="2 2"/>
<path d="M889 377H893" stroke="#80801f" stroke-opacity=".6"/>
<path d="M237 387H889" stroke="rgba(128,128,32,0.38)" stroke-dasharray="2 2"/>
<path d="M889 387H893" stroke="#80801f" stroke-opacity=".6"/>
<path d="M237 397H889" stroke="rgba(128,128,32,0.38)" stroke-dasharray="2 2"/>
<path d="M889 397H893" stroke="#80801f" stroke-opacity=".6"/>
<path d="M263 107V407" stroke="rgba(128,128,32,0.38)" stroke-dasharray="2 2"/>
<path d="M263 103V107M263 407V411" stroke="#80801f" stroke-opacity="0.55"/>
<path d="M291 107V407" stroke="rgba(128,128,32,0.38)" stroke-dasharray="2 2"/>
<path d="M291 103V107M291 407V411" stroke="#80801f" stroke-opacity="0.55"/>
<path d="M317 107V407" stroke="rgba(128,128,32,0.38)" stroke-dasharray="2 2"/>
<path d="M317 103V107M317 407V411" stroke="#80801f" stroke-opacity="0.55"/>
<path d="M345 107V407" stroke="rgba(128,128,32,0.38)" stroke-dasharray="2 2"/>
<path d="M345 103V107M345 407V411" stroke="#80801f" stroke-opacity="0.55"/>
<path d="M371 107V407" stroke="rgba(128,192,128,0.55)" stroke-dasharray="2 2"/>
<path d="M371 103V107M371 407V413" stroke="#7cbf85" stroke-opacity="0.8"/>
<path d="M399 107V407" stroke="rgba(128,128,32,0.38)" stroke-dasharray="2 2"/>
<path d="M399 103V107M399 407V411" stroke="#80801f" stroke-opacity="0.55"/>
<path d="M425 107V407" stroke="rgba(128,128,32,0.38)" stroke-dasharray="2 2"/>
<path d="M425 103V107M425 407V411" stroke="#80801f" stroke-opacity="0.55"/>
<path d="M453 107V407" stroke="rgba(128,128,32,0.38)" stroke-dasharray="2 2"/>
<path d="M453 103V107M453 407V411" stroke="#80801f" stroke-opacity="0.55"/>
<path d="M479 107V407" stroke="rgba(128,128,32,0.38)" stroke-dasharray="2 2"/>
<path d="M479 103V107M479 407V411" stroke="#80801f" stroke-opacity="0.55"/>
<path d="M507 107V407" stroke="rgba(128,128,32,0.38)" stroke-dasharray="2 2"/>
<path d="M507 103V107M507 407V411" stroke="#80801f" stroke-opacity="0.55"/>
<path d="M535 107V407" stroke="rgba(128,192,128,0.55)" stroke-dasharray="2 2"/>
<path d="M535 103V107M535 407V413" stroke="#7cbf85" stroke-opacity="0.8"/>
<path d="M561 107V407" stroke="rgba(128,128,32,0.38)" stroke-dasharray="2 2"/>
<path d="M561 103V107M561 407V411" stroke="#80801f" stroke-opacity="0.55"/>
<path d="M589 107V407" stroke="rgba(128,128,32,0.38)" stroke-dasharray="2 2"/>
<path d="M589 103V107M589 407V411" stroke="#80801f" stroke-opacity="0.55"/>
<path d="M615 107V407" stroke="rgba(128,128,32,0.38)" stroke-dasharray="2 2"/>
<path d="M615 103V107M615 407V411" stroke="#80801f" stroke-opacity="0.55"/>
<path d="M643 107V407" stroke="rgba(128,128,32,0.38)" stroke-dasharray="2 2"/>
<path d="M643 103V107M643 407V411" stroke="#80801f" stroke-opacity="0.55"/>
<path d="M669 107V407" stroke="rgba(128,128,32,0.38)" stroke-dasharray="2 2"/>
<path d="M669 103V107M669 407V411" stroke="#80801f" stroke-opacity="0.55"/>
<path d="M697 107V407" stroke="rgba(128,192,128,0.55)" stroke-dasharray="2 2"/>
<path d="M697 103V107M697 407V413" stroke="#7cbf85" stroke-opacity="0.8"/>
<path d="M723 107V407" stroke="rgba(128,128,32,0.38)" stroke-dasharray="2 2"/>
<path d="M723 103V107M723 407V411" stroke="#80801f" stroke-opacity="0.55"/>
<path d="M751 107V407" stroke="rgba(128,128,32,0.38)" stroke-dasharray="2 2"/>
<path d="M751 103V107M751 407V411" stroke="#80801f" stroke-opacity="0.55"/>
<path d="M777 107V407" stroke="rgba(128,128,32,0.38)" stroke-dasharray="2 2"/>
<path d="M777 103V107M777 407V411" stroke="#80801f" stroke-opacity="0.55"/>
<path d="M805 107V407" stroke="rgba(128,128,32,0.38)" stroke-dasharray="2 2"/>
<path d="M805 103V107M805 407V411" stroke="#80801f" stroke-opacity="0.55"/>
<path d="M833 107V407" stroke="rgba(128,128,32,0.38)" stroke-dasharray="2 2"/>
<path d="M833 103V107M833 407V411" stroke="#80801f" stroke-opacity="0.55"/>
<path d="M859 107V407" stroke="rgba(128,192,128,0.55)" stroke-dasharray="2 2"/>
<path d="M859 103V107M859 407V413" stroke="#7cbf85" stroke-opacity="0.8"/>
<path d="M887 107V407" stroke="rgba(128,128,32,0.38)" stroke-dasharray="2 2"/>
<path d="M887 103V107M887 407V411" stroke="#80801f" stroke-opacity="0.55"/>
<path d="M235 107H889" stroke="rgba(128,192,128,0.55)" stroke-dasharray="2 2"/>
<path d="M889 107H893" stroke="#7cbf85" stroke-opacity=".85"/>
<path d="M235 157H889" stroke="rgba(128,192,128,0.55)" stroke-dasharray="2 2"/>
<path d="M889 157H893" stroke="#7cbf85" stroke-opacity=".85"/>
<path d="M235 207H889" stroke="rgba(128,192,128,0.55)" stroke-dasharray="2 2"/>
<path d="M889 207H893" stroke="#7cbf85" stroke-opacity=".85"/>
<path d="M235 257H889" stroke="rgba(128,192,128,0.55)" stroke-dasharray="2 2"/>
<path d="M889 257H893" stroke="#7cbf85" stroke-opacity=".85"/>
<path d="M235 307H889" stroke="rgba(128,192,128,0.55)" stroke-dasharray="2 2"/>
<path d="M889 307H893" stroke="#7cbf85" stroke-opacity=".85"/>
<path d="M235 357H889" stroke="rgba(128,192,128,0.55)" stroke-dasharray="2 2"/>
<path d="M889 357H893" stroke="#7cbf85" stroke-opacity=".85"/>
<path d="M235 407H889" stroke="rgba(128,192,128,0.55)" stroke-dasharray="2 2"/>
<path d="M889 407H893" stroke="#7cbf85" stroke-opacity=".85"/>
</g>
<rect x="236" y="406" width="657" height="2" fill="#101010" fill-opacity=".5"/>
<path d="M233 103H245L239 93Z M893 401V413L903 407Z" fill="#fff"/>
<text x="366.97" y="97.40" font-size="26.50" letter-spacing="0.137" fill="#c0c0c0" stroke="#c0c0c0">Memory usage  (1day)</text>
<text transform="translate(133.00 256.40) rotate(-90)" x="-34.72" y="0" font-size="23.74" letter-spacing="-0.449" fill="#c0c0c0" stroke="#c0c0c0">bytes</text>
<text transform="translate(924.40 170.50) rotate(90)" x="-109.76" y="0" font-size="16.90" letter-spacing="-0.172" fill="#505050" stroke="#505050">RRDTOOL / TOBI OETIKER</text>
<text x="164.58" y="115.30" font-size="20.80" letter-spacing="-0.442" fill="#c0c0c0" stroke="#c0c0c0">300 M</text>
<text x="164.58" y="165.30" font-size="20.80" letter-spacing="-0.442" fill="#c0c0c0" stroke="#c0c0c0">250 M</text>
<text x="164.58" y="215.30" font-size="20.80" letter-spacing="-0.442" fill="#c0c0c0" stroke="#c0c0c0">200 M</text>
<text x="164.58" y="265.30" font-size="20.80" letter-spacing="-0.442" fill="#c0c0c0" stroke="#c0c0c0">150 M</text>
<text x="164.58" y="315.30" font-size="20.80" letter-spacing="-0.442" fill="#c0c0c0" stroke="#c0c0c0">100 M</text>
<text x="176.62" y="365.30" font-size="20.80" letter-spacing="-0.442" fill="#c0c0c0" stroke="#c0c0c0">50 M</text>
<text x="188.66" y="415.30" font-size="20.80" letter-spacing="-0.442" fill="#c0c0c0" stroke="#c0c0c0">0  </text>
<text x="340.68" y="432.90" font-size="20.80" letter-spacing="-0.442" fill="#c0c0c0" stroke="#c0c0c0">06:00</text>
<text x="504.68" y="432.90" font-size="20.80" letter-spacing="-0.442" fill="#c0c0c0" stroke="#c0c0c0">12:00</text>
<text x="666.68" y="432.90" font-size="20.80" letter-spacing="-0.442" fill="#c0c0c0" stroke="#c0c0c0">18:00</text>
<text x="828.68" y="432.90" font-size="20.80" letter-spacing="-0.442" fill="#c0c0c0" stroke="#c0c0c0">00:00</text>
<rect x="132" y="447.7" width="16.5" height="16.6" fill="#808080"/>
<rect x="134" y="450" width="12.6" height="12.5" fill="#FFA500"/>
<text x="156.78" y="462.20" font-size="20.80" letter-spacing="-0.442" fill="#c0c0c0" stroke="#c0c0c0">master</text>
<text x="424.78" y="462.20" font-size="20.80" letter-spacing="-0.442" fill="#c0c0c0" stroke="#c0c0c0">Cur:  256M</text>
<text x="596.58" y="462.20" font-size="20.80" letter-spacing="-0.442" fill="#c0c0c0" stroke="#c0c0c0">Min:  102M</text>
<text x="768.38" y="462.20" font-size="20.80" letter-spacing="-0.442" fill="#c0c0c0" stroke="#c0c0c0">Max:  256M</text>
<rect x="132" y="471.7" width="16.5" height="16.6" fill="#808080"/>
<rect x="134" y="474" width="12.6" height="12.5" fill="#44EEEE"/>
<text x="156.78" y="486.20" font-size="20.80" letter-spacing="-0.442" fill="#c0c0c0" stroke="#c0c0c0">Dovecot</text>
<text x="424.78" y="486.20" font-size="20.80" letter-spacing="-0.442" fill="#c0c0c0" stroke="#c0c0c0">Cur:    0M</text>
<text x="596.58" y="486.20" font-size="20.80" letter-spacing="-0.442" fill="#c0c0c0" stroke="#c0c0c0">Min:    0M</text>
<text x="768.38" y="486.20" font-size="20.80" letter-spacing="-0.442" fill="#c0c0c0" stroke="#c0c0c0">Max:    0M</text>
<rect x="132" y="495.7" width="16.5" height="16.6" fill="#808080"/>
<rect x="134" y="498" width="12.6" height="12.5" fill="#44EE44"/>
<text x="156.78" y="510.20" font-size="20.80" letter-spacing="-0.442" fill="#c0c0c0" stroke="#c0c0c0">sendmail</text>
<text x="424.78" y="510.20" font-size="20.80" letter-spacing="-0.442" fill="#c0c0c0" stroke="#c0c0c0">Cur:    0M</text>
<text x="596.58" y="510.20" font-size="20.80" letter-spacing="-0.442" fill="#c0c0c0" stroke="#c0c0c0">Min:    0M</text>
<text x="768.38" y="510.20" font-size="20.80" letter-spacing="-0.442" fill="#c0c0c0" stroke="#c0c0c0">Max:    0M</text>
<rect x="132" y="519.7" width="16.5" height="16.6" fill="#808080"/>
<rect x="134" y="522" width="12.6" height="12.5" fill="#4444EE"/>
<text x="156.78" y="534.20" font-size="20.80" letter-spacing="-0.442" fill="#c0c0c0" stroke="#c0c0c0">postfix</text>
<text x="424.78" y="534.20" font-size="20.80" letter-spacing="-0.442" fill="#c0c0c0" stroke="#c0c0c0">Cur:    4M</text>
<text x="596.58" y="534.20" font-size="20.80" letter-spacing="-0.442" fill="#c0c0c0" stroke="#c0c0c0">Min:    1M</text>
<text x="768.38" y="534.20" font-size="20.80" letter-spacing="-0.442" fill="#c0c0c0" stroke="#c0c0c0">Max:    9M</text>
<rect x="132" y="543.7" width="16.5" height="16.6" fill="#808080"/>
<rect x="134" y="546" width="12.6" height="12.5" fill="#448844"/>
<text x="156.78" y="558.20" font-size="20.80" letter-spacing="-0.442" fill="#c0c0c0" stroke="#c0c0c0">rmilter</text>
<text x="424.78" y="558.20" font-size="20.80" letter-spacing="-0.442" fill="#c0c0c0" stroke="#c0c0c0">Cur:    0M</text>
<text x="596.58" y="558.20" font-size="20.80" letter-spacing="-0.442" fill="#c0c0c0" stroke="#c0c0c0">Min:    0M</text>
<text x="768.38" y="558.20" font-size="20.80" letter-spacing="-0.442" fill="#c0c0c0" stroke="#c0c0c0">Max:    0M</text>
<rect x="132" y="567.7" width="16.5" height="16.6" fill="#808080"/>
<rect x="134" y="570" width="12.6" height="12.5" fill="#5F04B4"/>
<text x="156.78" y="582.20" font-size="20.80" letter-spacing="-0.442" fill="#c0c0c0" stroke="#c0c0c0">dovecot</text>
<text x="424.78" y="582.20" font-size="20.80" letter-spacing="-0.442" fill="#c0c0c0" stroke="#c0c0c0">Cur:   19M</text>
<text x="596.58" y="582.20" font-size="20.80" letter-spacing="-0.442" fill="#c0c0c0" stroke="#c0c0c0">Min:    4M</text>
<text x="768.38" y="582.20" font-size="20.80" letter-spacing="-0.442" fill="#c0c0c0" stroke="#c0c0c0">Max:   20M</text>
<rect x="132" y="591.7" width="16.5" height="16.6" fill="#808080"/>
<rect x="134" y="594" width="12.6" height="12.5" fill="#EE44EE"/>
<text x="156.78" y="606.20" font-size="20.80" letter-spacing="-0.442" fill="#c0c0c0" stroke="#c0c0c0">rspamd</text>
<text x="424.78" y="606.20" font-size="20.80" letter-spacing="-0.442" fill="#c0c0c0" stroke="#c0c0c0">Cur:  219M</text>
<text x="596.58" y="606.20" font-size="20.80" letter-spacing="-0.442" fill="#c0c0c0" stroke="#c0c0c0">Min:   28M</text>
<text x="768.38" y="606.20" font-size="20.80" letter-spacing="-0.442" fill="#c0c0c0" stroke="#c0c0c0">Max:  219M</text>
</g>
<g transform="translate(0 584)">
<rect x="104" y="50" width="846" height="576" fill="#424242"/>
<path d="M104 50H950L945 55H109V50Z" fill="#484848"/>
<rect x="949" y="50" width="1" height="576" fill="#b4b4b4"/>
<rect x="104" y="625" width="846" height="1" fill="#b4b4b4"/>
<rect x="109" y="55" width="836" height="566" fill="#101010"/>
<rect x="240" y="107" width="649" height="300" fill="#000"/>
<g clip-path="url(#cv)">
<polyline points="251.1,201.5 251.5,216.0 253.2,407.0 261.0,407.0 262.3,366.0 263.1,366.0 264.4,407.0 295.5,407.0 298.9,391.5 300.5,407.0 313.6,407.0 315.9,361.0 316.8,286.5 317.4,286.5 318.5,356.0 319.9,386.0 322.6,407.0 361.8,407.0 364.9,384.0 366.6,407.0 383.5,407.0 385.0,401.5 386.5,404.0 388.9,396.0 390.8,407.0 394.8,407.0 397.1,390.5 399.0,407.0 413.4,407.0 414.9,403.5 416.4,407.0 453.0,407.0 454.9,401.5 456.8,407.0 476.0,407.0 477.5,407.0 481.2,393.5 483.8,393.5 486.2,407.0 488.8,397.2 491.2,407.0 494.5,388.5 497.5,407.0 501.2,407.0 505.0,407.0 508.2,388.5 511.2,407.0 516.2,407.0 520.0,407.0 522.5,389.8 525.5,407.0 532.5,407.0 537.0,371.0 541.2,398.5 545.0,407.0 550.0,376.0 553.8,376.0 556.2,407.0 560.0,407.0 563.0,371.0 566.2,396.0 570.0,389.8 573.8,396.0 577.0,356.0 580.0,393.5 583.0,388.5 587.5,398.5 591.2,386.0 595.0,396.0 599.5,373.5 602.0,379.8 604.5,368.5 608.8,386.0 612.5,391.0 615.0,378.5 617.5,353.5 621.2,396.0 626.2,371.0 628.8,386.0 630.8,318.5 633.8,376.0 637.5,376.0 642.5,398.5 645.0,378.5 648.8,381.0 653.8,358.5 656.2,362.2 658.8,348.5 662.5,388.5 665.0,378.5 668.8,389.8 671.2,342.2 674.5,366.0 677.0,358.5 678.8,158.5" fill="none" stroke="#FFA500" stroke-width="4.2" stroke-linejoin="round" stroke-linecap="round"/>
<polyline points="871.5,406.0 873.2,401.5 875.5,406.0" fill="none" stroke="#FFA500" stroke-width="3.5" stroke-linejoin="round" stroke-linecap="round"/>
<polyline points="871.8,406.0 873.2,403.5 874.8,406.0" fill="none" stroke="#4444EE" stroke-width="3" stroke-linejoin="round" stroke-linecap="round"/>
<polyline points="251.0,407.0 679.5,407.0" fill="none" stroke="#44EEEE" stroke-width="4.0" stroke-linejoin="round" stroke-linecap="butt"/>
<polyline points="251.0,407.0 679.5,407.0" fill="none" stroke="#44EE44" stroke-width="4.0" stroke-linejoin="round" stroke-linecap="butt"/>
<polyline points="251.0,407.0 486.0,407.0 488.0,404.0 492.0,404.0 495.3,402.0 498.2,402.0 501.6,402.0 505.4,407.0 508.8,407.0 511.5,401.0 515.1,402.0 519.3,404.0 522.9,402.0 526.6,402.0 529.2,402.0 531.9,407.0 534.8,407.0 538.4,404.0 541.5,402.0 545.4,402.0 548.4,406.0 551.8,401.0 554.5,401.0 557.6,402.0 561.8,407.0 565.5,406.0 569.3,402.0 572.4,407.0 575.9,407.0 579.1,406.0 582.3,407.0 586.3,407.0 589.2,407.0 592.6,401.0 595.8,407.0 599.3,407.0 603.2,401.0 606.3,401.0 609.5,399.0 613.3,405.0 616.1,395.0 618.8,405.0 622.2,399.0 625.1,397.0 628.0,397.0 630.9,395.0 634.7,399.0 638.3,405.0 641.6,403.0 644.2,397.0 647.3,405.0 650.2,399.0 654.4,397.0 658.0,405.0 660.7,403.0 663.6,401.0 666.2,397.0 669.4,401.0 672.6,405.0 675.5,405.0 678.8,374.8 679.5,404.0" fill="none" stroke="#4444EE" stroke-width="3.8" stroke-linejoin="round" stroke-linecap="round"/>
<polyline points="251.0,407.0 679.5,407.0" fill="none" stroke="#448844" stroke-width="4.0" stroke-linejoin="round" stroke-linecap="butt"/>
<polyline points="251.1,369.0 252.2,391.0 253.4,402.0 256.0,407.0 294.5,407.0 297.1,398.5 299.5,407.0 484.0,407.0 486.0,401.0 489.0,405.0 492.9,400.0 496.5,401.0 499.2,403.0 503.0,406.0 506.7,406.0 509.4,403.0 513.4,403.0 516.9,401.0 519.9,400.0 522.8,405.0 525.7,403.0 528.6,407.0 531.4,401.0 534.7,406.0 537.3,407.0 540.3,406.0 544.4,406.0 548.4,405.0 551.5,406.0 555.0,400.0 558.6,406.0 562.7,400.0 565.6,403.0 568.7,405.0 571.9,406.0 574.9,405.0 578.0,401.0 581.6,401.0 585.2,405.0 587.9,405.0 591.9,403.0 596.2,404.0 598.8,390.0 601.3,404.0 603.5,406.0 606.9,400.0 609.8,405.0 613.9,407.0 618.0,405.0 622.0,407.0 625.5,403.0 628.6,401.0 632.6,403.0 635.3,406.0 638.9,406.0 641.7,406.0 645.7,403.0 648.9,405.0 652.9,405.0 656.8,407.0 660.3,405.0 664.3,407.0 667.6,407.0 670.5,401.0 674.1,406.0 679.0,407.0" fill="none" stroke="#5F04B4" stroke-width="3.8" stroke-linejoin="round" stroke-linecap="round"/>
<polyline points="251.0,402.0 253.0,405.5 257.0,407.0 400.9,407.0 402.2,393.5 403.2,393.5 404.6,407.0 486.0,407.0 490.0,406.0 494.2,406.5 497.5,404.0 500.5,405.0 504.4,405.0 507.6,405.0 512.5,404.0 515.6,406.0 518.9,406.0 523.8,405.9 527.1,406.8 530.2,406.7 534.2,404.6 537.4,403.5 541.1,403.4 545.9,405.8 549.3,406.2 553.8,405.1 558.5,405.5 563.4,404.8 566.9,405.7 570.3,405.7 575.1,405.5 579.9,404.4 583.2,405.3 587.0,405.2 591.9,405.1 595.2,403.0 598.6,404.9 602.2,404.8 605.5,404.7 609.5,402.6 613.5,404.5 617.3,403.4 620.7,404.3 625.1,404.2 628.5,402.1 632.9,404.0 636.0,401.9 640.4,403.8 644.9,400.7 649.9,403.5 653.1,400.5 656.9,403.3 660.2,401.3 663.3,402.7 670.0,403.0 675.0,402.0 678.9,397.5" fill="none" stroke="#EE44EE" stroke-width="4.6" stroke-linejoin="round" stroke-linecap="round"/>
<polyline points="253.0,407.0 678.0,407.0" fill="none" stroke="#EE44EE" stroke-width="4.6" stroke-linejoin="round" stroke-linecap="butt"/>
<polyline points="871.5,407.0 892.0,407.0" fill="none" stroke="#EE44EE" stroke-width="4.6" stroke-linejoin="round" stroke-linecap="butt"/>
</g>
<g shape-rendering="crispEdges" stroke-width="2">
<path d="M237 119H889" stroke="rgba(128,128,32,0.38)" stroke-dasharray="2 2"/>
<path d="M889 119H893" stroke="#80801f" stroke-opacity=".6"/>
<path d="M237 131H889" stroke="rgba(128,128,32,0.38)" stroke-dasharray="2 2"/>
<path d="M889 131H893" stroke="#80801f" stroke-opacity=".6"/>
<path d="M237 143H889" stroke="rgba(128,128,32,0.38)" stroke-dasharray="2 2"/>
<path d="M889 143H893" stroke="#80801f" stroke-opacity=".6"/>
<path d="M237 155H889" stroke="rgba(128,128,32,0.38)" stroke-dasharray="2 2"/>
<path d="M889 155H893" stroke="#80801f" stroke-opacity=".6"/>
<path d="M237 179H889" stroke="rgba(128,128,32,0.38)" stroke-dasharray="2 2"/>
<path d="M889 179H893" stroke="#80801f" stroke-opacity=".6"/>
<path d="M237 191H889" stroke="rgba(128,128,32,0.38)" stroke-dasharray="2 2"/>
<path d="M889 191H893" stroke="#80801f" stroke-opacity=".6"/>
<path d="M237 203H889" stroke="rgba(128,128,32,0.38)" stroke-dasharray="2 2"/>
<path d="M889 203H893" stroke="#80801f" stroke-opacity=".6"/>
<path d="M237 215H889" stroke="rgba(128,128,32,0.38)" stroke-dasharray="2 2"/>
<path d="M889 215H893" stroke="#80801f" stroke-opacity=".6"/>
<path d="M237 239H889" stroke="rgba(128,128,32,0.38)" stroke-dasharray="2 2"/>
<path d="M889 239H893" stroke="#80801f" stroke-opacity=".6"/>
<path d="M237 251H889" stroke="rgba(128,128,32,0.38)" stroke-dasharray="2 2"/>
<path d="M889 251H893" stroke="#80801f" stroke-opacity=".6"/>
<path d="M237 263H889" stroke="rgba(128,128,32,0.38)" stroke-dasharray="2 2"/>
<path d="M889 263H893" stroke="#80801f" stroke-opacity=".6"/>
<path d="M237 275H889" stroke="rgba(128,128,32,0.38)" stroke-dasharray="2 2"/>
<path d="M889 275H893" stroke="#80801f" stroke-opacity=".6"/>
<path d="M237 299H889" stroke="rgba(128,128,32,0.38)" stroke-dasharray="2 2"/>
<path d="M889 299H893" stroke="#80801f" stroke-opacity=".6"/>
<path d="M237 311H889" stroke="rgba(128,128,32,0.38)" stroke-dasharray="2 2"/>
<path d="M889 311H893" stroke="#80801f" stroke-opacity=".6"/>
<path d="M237 323H889" stroke="rgba(128,128,32,0.38)" stroke-dasharray="2 2"/>
<path d="M889 323H893" stroke="#80801f" stroke-opacity=".6"/>
<path d="M237 335H889" stroke="rgba(128,128,32,0.38)" stroke-dasharray="2 2"/>
<path d="M889 335H893" stroke="#80801f" stroke-opacity=".6"/>
<path d="M237 359H889" stroke="rgba(128,128,32,0.38)" stroke-dasharray="2 2"/>
<path d="M889 359H893" stroke="#80801f" stroke-opacity=".6"/>
<path d="M237 371H889" stroke="rgba(128,128,32,0.38)" stroke-dasharray="2 2"/>
<path d="M889 371H893" stroke="#80801f" stroke-opacity=".6"/>
<path d="M237 383H889" stroke="rgba(128,128,32,0.38)" stroke-dasharray="2 2"/>
<path d="M889 383H893" stroke="#80801f" stroke-opacity=".6"/>
<path d="M237 395H889" stroke="rgba(128,128,32,0.38)" stroke-dasharray="2 2"/>
<path d="M889 395H893" stroke="#80801f" stroke-opacity=".6"/>
<path d="M263 107V407" stroke="rgba(128,128,32,0.38)" stroke-dasharray="2 2"/>
<path d="M263 103V107M263 407V411" stroke="#80801f" stroke-opacity="0.55"/>
<path d="M291 107V407" stroke="rgba(128,128,32,0.38)" stroke-dasharray="2 2"/>
<path d="M291 103V107M291 407V411" stroke="#80801f" stroke-opacity="0.55"/>
<path d="M317 107V407" stroke="rgba(128,128,32,0.38)" stroke-dasharray="2 2"/>
<path d="M317 103V107M317 407V411" stroke="#80801f" stroke-opacity="0.55"/>
<path d="M345 107V407" stroke="rgba(128,128,32,0.38)" stroke-dasharray="2 2"/>
<path d="M345 103V107M345 407V411" stroke="#80801f" stroke-opacity="0.55"/>
<path d="M371 107V407" stroke="rgba(128,192,128,0.55)" stroke-dasharray="2 2"/>
<path d="M371 103V107M371 407V413" stroke="#7cbf85" stroke-opacity="0.8"/>
<path d="M399 107V407" stroke="rgba(128,128,32,0.38)" stroke-dasharray="2 2"/>
<path d="M399 103V107M399 407V411" stroke="#80801f" stroke-opacity="0.55"/>
<path d="M425 107V407" stroke="rgba(128,128,32,0.38)" stroke-dasharray="2 2"/>
<path d="M425 103V107M425 407V411" stroke="#80801f" stroke-opacity="0.55"/>
<path d="M453 107V407" stroke="rgba(128,128,32,0.38)" stroke-dasharray="2 2"/>
<path d="M453 103V107M453 407V411" stroke="#80801f" stroke-opacity="0.55"/>
<path d="M479 107V407" stroke="rgba(128,128,32,0.38)" stroke-dasharray="2 2"/>
<path d="M479 103V107M479 407V411" stroke="#80801f" stroke-opacity="0.55"/>
<path d="M507 107V407" stroke="rgba(128,128,32,0.38)" stroke-dasharray="2 2"/>
<path d="M507 103V107M507 407V411" stroke="#80801f" stroke-opacity="0.55"/>
<path d="M535 107V407" stroke="rgba(128,192,128,0.55)" stroke-dasharray="2 2"/>
<path d="M535 103V107M535 407V413" stroke="#7cbf85" stroke-opacity="0.8"/>
<path d="M561 107V407" stroke="rgba(128,128,32,0.38)" stroke-dasharray="2 2"/>
<path d="M561 103V107M561 407V411" stroke="#80801f" stroke-opacity="0.55"/>
<path d="M589 107V407" stroke="rgba(128,128,32,0.38)" stroke-dasharray="2 2"/>
<path d="M589 103V107M589 407V411" stroke="#80801f" stroke-opacity="0.55"/>
<path d="M615 107V407" stroke="rgba(128,128,32,0.38)" stroke-dasharray="2 2"/>
<path d="M615 103V107M615 407V411" stroke="#80801f" stroke-opacity="0.55"/>
<path d="M643 107V407" stroke="rgba(128,128,32,0.38)" stroke-dasharray="2 2"/>
<path d="M643 103V107M643 407V411" stroke="#80801f" stroke-opacity="0.55"/>
<path d="M669 107V407" stroke="rgba(128,128,32,0.38)" stroke-dasharray="2 2"/>
<path d="M669 103V107M669 407V411" stroke="#80801f" stroke-opacity="0.55"/>
<path d="M697 107V407" stroke="rgba(128,192,128,0.55)" stroke-dasharray="2 2"/>
<path d="M697 103V107M697 407V413" stroke="#7cbf85" stroke-opacity="0.8"/>
<path d="M723 107V407" stroke="rgba(128,128,32,0.38)" stroke-dasharray="2 2"/>
<path d="M723 103V107M723 407V411" stroke="#80801f" stroke-opacity="0.55"/>
<path d="M751 107V407" stroke="rgba(128,128,32,0.38)" stroke-dasharray="2 2"/>
<path d="M751 103V107M751 407V411" stroke="#80801f" stroke-opacity="0.55"/>
<path d="M777 107V407" stroke="rgba(128,128,32,0.38)" stroke-dasharray="2 2"/>
<path d="M777 103V107M777 407V411" stroke="#80801f" stroke-opacity="0.55"/>
<path d="M805 107V407" stroke="rgba(128,128,32,0.38)" stroke-dasharray="2 2"/>
<path d="M805 103V107M805 407V411" stroke="#80801f" stroke-opacity="0.55"/>
<path d="M833 107V407" stroke="rgba(128,128,32,0.38)" stroke-dasharray="2 2"/>
<path d="M833 103V107M833 407V411" stroke="#80801f" stroke-opacity="0.55"/>
<path d="M859 107V407" stroke="rgba(128,192,128,0.55)" stroke-dasharray="2 2"/>
<path d="M859 103V107M859 407V413" stroke="#7cbf85" stroke-opacity="0.8"/>
<path d="M887 107V407" stroke="rgba(128,128,32,0.38)" stroke-dasharray="2 2"/>
<path d="M887 103V107M887 407V411" stroke="#80801f" stroke-opacity="0.55"/>
<path d="M235 107H889" stroke="rgba(128,192,128,0.55)" stroke-dasharray="2 2"/>
<path d="M889 107H893" stroke="#7cbf85" stroke-opacity=".85"/>
<path d="M235 167H889" stroke="rgba(128,192,128,0.55)" stroke-dasharray="2 2"/>
<path d="M889 167H893" stroke="#7cbf85" stroke-opacity=".85"/>
<path d="M235 227H889" stroke="rgba(128,192,128,0.55)" stroke-dasharray="2 2"/>
<path d="M889 227H893" stroke="#7cbf85" stroke-opacity=".85"/>
<path d="M235 287H889" stroke="rgba(128,192,128,0.55)" stroke-dasharray="2 2"/>
<path d="M889 287H893" stroke="#7cbf85" stroke-opacity=".85"/>
<path d="M235 347H889" stroke="rgba(128,192,128,0.55)" stroke-dasharray="2 2"/>
<path d="M889 347H893" stroke="#7cbf85" stroke-opacity=".85"/>
<path d="M235 407H889" stroke="rgba(128,192,128,0.55)" stroke-dasharray="2 2"/>
<path d="M889 407H893" stroke="#7cbf85" stroke-opacity=".85"/>
</g>
<rect x="236" y="406" width="657" height="2" fill="#101010" fill-opacity=".5"/>
<path d="M233 103H245L239 93Z M893 401V413L903 407Z" fill="#fff"/>
<text x="383.01" y="97.40" font-size="26.50" letter-spacing="0.137" fill="#c0c0c0" stroke="#c0c0c0">Disk usage  (1day)</text>
<text transform="translate(133.00 256.40) rotate(-90)" x="-48.52" y="0" font-size="23.74" letter-spacing="-0.449" fill="#c0c0c0" stroke="#c0c0c0">bytes/s</text>
<text transform="translate(924.40 170.50) rotate(90)" x="-109.76" y="0" font-size="16.90" letter-spacing="-0.172" fill="#505050" stroke="#505050">RRDTOOL / TOBI OETIKER</text>
<text x="164.58" y="115.30" font-size="20.80" letter-spacing="-0.442" fill="#c0c0c0" stroke="#c0c0c0">500 k</text>
<text x="164.58" y="175.30" font-size="20.80" letter-spacing="-0.442" fill="#c0c0c0" stroke="#c0c0c0">400 k</text>
<text x="164.58" y="235.30" font-size="20.80" letter-spacing="-0.442" fill="#c0c0c0" stroke="#c0c0c0">300 k</text>
<text x="164.58" y="295.30" font-size="20.80" letter-spacing="-0.442" fill="#c0c0c0" stroke="#c0c0c0">200 k</text>
<text x="164.58" y="355.30" font-size="20.80" letter-spacing="-0.442" fill="#c0c0c0" stroke="#c0c0c0">100 k</text>
<text x="188.66" y="415.30" font-size="20.80" letter-spacing="-0.442" fill="#c0c0c0" stroke="#c0c0c0">0  </text>
<text x="340.68" y="432.90" font-size="20.80" letter-spacing="-0.442" fill="#c0c0c0" stroke="#c0c0c0">06:00</text>
<text x="504.68" y="432.90" font-size="20.80" letter-spacing="-0.442" fill="#c0c0c0" stroke="#c0c0c0">12:00</text>
<text x="666.68" y="432.90" font-size="20.80" letter-spacing="-0.442" fill="#c0c0c0" stroke="#c0c0c0">18:00</text>
<text x="828.68" y="432.90" font-size="20.80" letter-spacing="-0.442" fill="#c0c0c0" stroke="#c0c0c0">00:00</text>
<rect x="132" y="447.7" width="16.5" height="16.6" fill="#808080"/>
<rect x="134" y="450" width="12.6" height="12.5" fill="#FFA500"/>
<text x="156.78" y="462.20" font-size="20.80" letter-spacing="-0.442" fill="#c0c0c0" stroke="#c0c0c0">master</text>
<text x="424.78" y="462.20" font-size="20.80" letter-spacing="-0.442" fill="#c0c0c0" stroke="#c0c0c0">Cur:  0.0M</text>
<text x="596.58" y="462.20" font-size="20.80" letter-spacing="-0.442" fill="#c0c0c0" stroke="#c0c0c0">Min:  0.0M</text>
<text x="768.38" y="462.20" font-size="20.80" letter-spacing="-0.442" fill="#c0c0c0" stroke="#c0c0c0">Max:  0.4M</text>
<rect x="132" y="471.7" width="16.5" height="16.6" fill="#808080"/>
<rect x="134" y="474" width="12.6" height="12.5" fill="#44EEEE"/>
<text x="156.78" y="486.20" font-size="20.80" letter-spacing="-0.442" fill="#c0c0c0" stroke="#c0c0c0">Dovecot</text>
<text x="424.78" y="486.20" font-size="20.80" letter-spacing="-0.442" fill="#c0c0c0" stroke="#c0c0c0">Cur:  0.0M</text>
<text x="596.58" y="486.20" font-size="20.80" letter-spacing="-0.442" fill="#c0c0c0" stroke="#c0c0c0">Min:  0.0M</text>
<text x="768.38" y="486.20" font-size="20.80" letter-spacing="-0.442" fill="#c0c0c0" stroke="#c0c0c0">Max:  0.0M</text>
<rect x="132" y="495.7" width="16.5" height="16.6" fill="#808080"/>
<rect x="134" y="498" width="12.6" height="12.5" fill="#44EE44"/>
<text x="156.78" y="510.20" font-size="20.80" letter-spacing="-0.442" fill="#c0c0c0" stroke="#c0c0c0">sendmail</text>
<text x="424.78" y="510.20" font-size="20.80" letter-spacing="-0.442" fill="#c0c0c0" stroke="#c0c0c0">Cur:  0.0M</text>
<text x="596.58" y="510.20" font-size="20.80" letter-spacing="-0.442" fill="#c0c0c0" stroke="#c0c0c0">Min:  0.0M</text>
<text x="768.38" y="510.20" font-size="20.80" letter-spacing="-0.442" fill="#c0c0c0" stroke="#c0c0c0">Max:  0.0M</text>
</g>
<g transform="translate(854 584)">
<rect x="104" y="50" width="846" height="576" fill="#424242"/>
<path d="M104 50H950L945 55H109V50Z" fill="#484848"/>
<rect x="949" y="50" width="1" height="576" fill="#b4b4b4"/>
<rect x="104" y="625" width="846" height="1" fill="#b4b4b4"/>
<rect x="109" y="55" width="836" height="566" fill="#101010"/>
<rect x="240" y="107" width="649" height="300" fill="#000"/>
<g clip-path="url(#cv)">
<polyline points="249.9,404.9 252.7,384.8 260.3,384.8 262.7,392.4 265.2,384.8 292.9,384.8 297.8,389.3 301.3,384.8 313.1,384.3 314.9,389.6 316.3,284.8 317.7,284.8 319.3,386.8 321.0,389.6 323.5,385.2 330.4,384.0 332.8,378.5 335.3,384.3 338.8,385.7 361.0,384.8 365.2,389.6 367.9,384.8 383.2,384.8 385.3,388.2 386.7,385.4 388.8,390.3 391.6,384.8 394.3,385.4 397.1,389.6 399.2,384.8 402.7,388.2 405.4,385.2 412.4,385.2 415.2,386.8 417.9,384.8 444.3,384.8 447.1,386.1 452.7,385.2 454.8,388.2 458.2,385.4 466.0,384.9 466.0,385.0 477.9,384.5 481.0,391.0 484.8,385.4 491.0,386.0 494.8,393.5 497.2,385.4 506.0,385.0 509.1,393.5 511.6,385.4 519.8,385.4 522.9,392.9 526.0,385.0 533.5,384.8 536.6,396.0 541.0,385.4 546.0,384.8 549.8,392.9 556.0,386.6 561.0,386.6 563.2,399.1 566.0,385.4 569.8,392.2 573.5,385.4 576.6,398.5 579.8,385.4 583.5,392.2 586.0,387.9 591.0,394.1 594.8,385.4 598.5,399.1 601.0,385.4 604.8,396.6 612.2,396.0 614.8,389.1 617.9,399.8 622.2,387.2 626.0,397.2 628.5,386.0 631.0,403.5 633.5,394.8 636.0,398.5 642.2,389.1 646.0,398.5 651.0,397.2 657.2,400.4 663.5,392.9 666.0,396.0 669.1,392.9 671.0,403.5 676.0,402.2" fill="none" stroke="#FFA500" stroke-width="4.2" stroke-linejoin="round" stroke-linecap="round"/>
<polyline points="873.0,366.7 875.3,383.8 888.2,383.0 893.0,383.0" fill="none" stroke="#FFA500" stroke-width="4.2" stroke-linejoin="round" stroke-linecap="round"/>
<polyline points="251.0,407.0 679.5,407.0" fill="none" stroke="#44EEEE" stroke-width="4.0" stroke-linejoin="round" stroke-linecap="butt"/>
<polyline points="251.0,407.0 679.5,407.0" fill="none" stroke="#44EE44" stroke-width="4.0" stroke-linejoin="round" stroke-linecap="butt"/>
<polyline points="251.0,407.0 678.5,407.0 679.5,400.0 679.5,106.0" fill="none" stroke="#4444EE" stroke-width="4.0" stroke-linejoin="round" stroke-linecap="round"/>
<polyline points="251.0,407.0 679.5,407.0" fill="none" stroke="#448844" stroke-width="4.0" stroke-linejoin="round" stroke-linecap="butt"/>
<polyline points="250.6,397.5 252.5,406.0 293.5,407.0 296.7,402.5 300.0,407.0 399.5,407.0 403.0,402.5 406.5,407.0 535.0,407.0 538.5,402.8 542.0,407.0 595.5,407.0 599.0,402.8 602.5,407.0 676.0,407.0" fill="none" stroke="#5F04B4" stroke-width="4.0" stroke-linejoin="round" stroke-linecap="round"/>
<polyline points="249.9,407.0 677.0,407.0 679.0,402.0 679.0,200.0" fill="none" stroke="#EE44EE" stroke-width="4.6" stroke-linejoin="round" stroke-linecap="round"/>
<polyline points="871.5,407.0 893.0,407.0" fill="none" stroke="#EE44EE" stroke-width="4.6" stroke-linejoin="round" stroke-linecap="butt"/>
</g>
<g shape-rendering="crispEdges" stroke-width="2">
<path d="M237 122H889" stroke="rgba(128,128,32,0.38)" stroke-dasharray="2 2"/>
<path d="M889 122H893" stroke="#80801f" stroke-opacity=".6"/>
<path d="M237 152H889" stroke="rgba(128,128,32,0.38)" stroke-dasharray="2 2"/>
<path d="M889 152H893" stroke="#80801f" stroke-opacity=".6"/>
<path d="M237 182H889" stroke="rgba(128,128,32,0.38)" stroke-dasharray="2 2"/>
<path d="M889 182H893" stroke="#80801f" stroke-opacity=".6"/>
<path d="M237 212H889" stroke="rgba(128,128,32,0.38)" stroke-dasharray="2 2"/>
<path d="M889 212H893" stroke="#80801f" stroke-opacity=".6"/>
<path d="M237 242H889" stroke="rgba(128,128,32,0.38)" stroke-dasharray="2 2"/>
<path d="M889 242H893" stroke="#80801f" stroke-opacity=".6"/>
<path d="M237 272H889" stroke="rgba(128,128,32,0.38)" stroke-dasharray="2 2"/>
<path d="M889 272H893" stroke="#80801f" stroke-opacity=".6"/>
<path d="M237 302H889" stroke="rgba(128,128,32,0.38)" stroke-dasharray="2 2"/>
<path d="M889 302H893" stroke="#80801f" stroke-opacity=".6"/>
<path d="M237 332H889" stroke="rgba(128,128,32,0.38)" stroke-dasharray="2 2"/>
<path d="M889 332H893" stroke="#80801f" stroke-opacity=".6"/>
<path d="M237 362H889" stroke="rgba(128,128,32,0.38)" stroke-dasharray="2 2"/>
<path d="M889 362H893" stroke="#80801f" stroke-opacity=".6"/>
<path d="M237 392H889" stroke="rgba(128,128,32,0.38)" stroke-dasharray="2 2"/>
<path d="M889 392H893" stroke="#80801f" stroke-opacity=".6"/>
<path d="M263 107V407" stroke="rgba(128,128,32,0.38)" stroke-dasharray="2 2"/>
<path d="M263 103V107M263 407V411" stroke="#80801f" stroke-opacity="0.55"/>
<path d="M291 107V407" stroke="rgba(128,128,32,0.38)" stroke-dasharray="2 2"/>
<path d="M291 103V107M291 407V411" stroke="#80801f" stroke-opacity="0.55"/>
<path d="M317 107V407" stroke="rgba(128,128,32,0.38)" stroke-dasharray="2 2"/>
<path d="M317 103V107M317 407V411" stroke="#80801f" stroke-opacity="0.55"/>
<path d="M345 107V407" stroke="rgba(128,128,32,0.38)" stroke-dasharray="2 2"/>
<path d="M345 103V107M345 407V411" stroke="#80801f" stroke-opacity="0.55"/>
<path d="M371 107V407" stroke="rgba(128,192,128,0.55)" stroke-dasharray="2 2"/>
<path d="M371 103V107M371 407V413" stroke="#7cbf85" stroke-opacity="0.8"/>
<path d="M399 107V407" stroke="rgba(128,128,32,0.38)" stroke-dasharray="2 2"/>
<path d="M399 103V107M399 407V411" stroke="#80801f" stroke-opacity="0.55"/>
<path d="M425 107V407" stroke="rgba(128,128,32,0.38)" stroke-dasharray="2 2"/>
<path d="M425 103V107M425 407V411" stroke="#80801f" stroke-opacity="0.55"/>
<path d="M453 107V407" stroke="rgba(128,128,32,0.38)" stroke-dasharray="2 2"/>
<path d="M453 103V107M453 407V411" stroke="#80801f" stroke-opacity="0.55"/>
<path d="M479 107V407" stroke="rgba(128,128,32,0.38)" stroke-dasharray="2 2"/>
<path d="M479 103V107M479 407V411" stroke="#80801f" stroke-opacity="0.55"/>
<path d="M507 107V407" stroke="rgba(128,128,32,0.38)" stroke-dasharray="2 2"/>
<path d="M507 103V107M507 407V411" stroke="#80801f" stroke-opacity="0.55"/>
<path d="M535 107V407" stroke="rgba(128,192,128,0.55)" stroke-dasharray="2 2"/>
<path d="M535 103V107M535 407V413" stroke="#7cbf85" stroke-opacity="0.8"/>
<path d="M561 107V407" stroke="rgba(128,128,32,0.38)" stroke-dasharray="2 2"/>
<path d="M561 103V107M561 407V411" stroke="#80801f" stroke-opacity="0.55"/>
<path d="M589 107V407" stroke="rgba(128,128,32,0.38)" stroke-dasharray="2 2"/>
<path d="M589 103V107M589 407V411" stroke="#80801f" stroke-opacity="0.55"/>
<path d="M615 107V407" stroke="rgba(128,128,32,0.38)" stroke-dasharray="2 2"/>
<path d="M615 103V107M615 407V411" stroke="#80801f" stroke-opacity="0.55"/>
<path d="M643 107V407" stroke="rgba(128,128,32,0.38)" stroke-dasharray="2 2"/>
<path d="M643 103V107M643 407V411" stroke="#80801f" stroke-opacity="0.55"/>
<path d="M669 107V407" stroke="rgba(128,128,32,0.38)" stroke-dasharray="2 2"/>
<path d="M669 103V107M669 407V411" stroke="#80801f" stroke-opacity="0.55"/>
<path d="M697 107V407" stroke="rgba(128,192,128,0.55)" stroke-dasharray="2 2"/>
<path d="M697 103V107M697 407V413" stroke="#7cbf85" stroke-opacity="0.8"/>
<path d="M723 107V407" stroke="rgba(128,128,32,0.38)" stroke-dasharray="2 2"/>
<path d="M723 103V107M723 407V411" stroke="#80801f" stroke-opacity="0.55"/>
<path d="M751 107V407" stroke="rgba(128,128,32,0.38)" stroke-dasharray="2 2"/>
<path d="M751 103V107M751 407V411" stroke="#80801f" stroke-opacity="0.55"/>
<path d="M777 107V407" stroke="rgba(128,128,32,0.38)" stroke-dasharray="2 2"/>
<path d="M777 103V107M777 407V411" stroke="#80801f" stroke-opacity="0.55"/>
<path d="M805 107V407" stroke="rgba(128,128,32,0.38)" stroke-dasharray="2 2"/>
<path d="M805 103V107M805 407V411" stroke="#80801f" stroke-opacity="0.55"/>
<path d="M833 107V407" stroke="rgba(128,128,32,0.38)" stroke-dasharray="2 2"/>
<path d="M833 103V107M833 407V411" stroke="#80801f" stroke-opacity="0.55"/>
<path d="M859 107V407" stroke="rgba(128,192,128,0.55)" stroke-dasharray="2 2"/>
<path d="M859 103V107M859 407V413" stroke="#7cbf85" stroke-opacity="0.8"/>
<path d="M887 107V407" stroke="rgba(128,128,32,0.38)" stroke-dasharray="2 2"/>
<path d="M887 103V107M887 407V411" stroke="#80801f" stroke-opacity="0.55"/>
<path d="M235 107H889" stroke="rgba(128,192,128,0.55)" stroke-dasharray="2 2"/>
<path d="M889 107H893" stroke="#7cbf85" stroke-opacity=".85"/>
<path d="M235 137H889" stroke="rgba(128,192,128,0.55)" stroke-dasharray="2 2"/>
<path d="M889 137H893" stroke="#7cbf85" stroke-opacity=".85"/>
<path d="M235 167H889" stroke="rgba(128,192,128,0.55)" stroke-dasharray="2 2"/>
<path d="M889 167H893" stroke="#7cbf85" stroke-opacity=".85"/>
<path d="M235 197H889" stroke="rgba(128,192,128,0.55)" stroke-dasharray="2 2"/>
<path d="M889 197H893" stroke="#7cbf85" stroke-opacity=".85"/>
<path d="M235 227H889" stroke="rgba(128,192,128,0.55)" stroke-dasharray="2 2"/>
<path d="M889 227H893" stroke="#7cbf85" stroke-opacity=".85"/>
<path d="M235 257H889" stroke="rgba(128,192,128,0.55)" stroke-dasharray="2 2"/>
<path d="M889 257H893" stroke="#7cbf85" stroke-opacity=".85"/>
<path d="M235 287H889" stroke="rgba(128,192,128,0.55)" stroke-dasharray="2 2"/>
<path d="M889 287H893" stroke="#7cbf85" stroke-opacity=".85"/>
<path d="M235 317H889" stroke="rgba(128,192,128,0.55)" stroke-dasharray="2 2"/>
<path d="M889 317H893" stroke="#7cbf85" stroke-opacity=".85"/>
<path d="M235 347H889" stroke="rgba(128,192,128,0.55)" stroke-dasharray="2 2"/>
<path d="M889 347H893" stroke="#7cbf85" stroke-opacity=".85"/>
<path d="M235 377H889" stroke="rgba(128,192,128,0.55)" stroke-dasharray="2 2"/>
<path d="M889 377H893" stroke="#7cbf85" stroke-opacity=".85"/>
<path d="M235 407H889" stroke="rgba(128,192,128,0.55)" stroke-dasharray="2 2"/>
<path d="M889 407H893" stroke="#7cbf85" stroke-opacity=".85"/>
</g>
<rect x="236" y="406" width="657" height="2" fill="#101010" fill-opacity=".5"/>
<path d="M233 103H245L239 93Z M893 401V413L903 407Z" fill="#fff"/>
<text x="358.95" y="97.40" font-size="26.50" letter-spacing="0.137" fill="#c0c0c0" stroke="#c0c0c0">Network usage  (1day)</text>
<text transform="translate(133.00 256.40) rotate(-90)" x="-41.62" y="0" font-size="23.74" letter-spacing="-0.449" fill="#c0c0c0" stroke="#c0c0c0">bits/s</text>
<text transform="translate(924.40 170.50) rotate(90)" x="-109.76" y="0" font-size="16.90" letter-spacing="-0.172" fill="#505050" stroke="#505050">RRDTOOL / TOBI OETIKER</text>
<text x="152.54" y="115.30" font-size="20.80" letter-spacing="-0.442" fill="#c0c0c0" stroke="#c0c0c0">1000 k</text>
<text x="164.58" y="145.30" font-size="20.80" letter-spacing="-0.442" fill="#c0c0c0" stroke="#c0c0c0">900 k</text>
<text x="164.58" y="175.30" font-size="20.80" letter-spacing="-0.442" fill="#c0c0c0" stroke="#c0c0c0">800 k</text>
<text x="164.58" y="205.30" font-size="20.80" letter-spacing="-0.442" fill="#c0c0c0" stroke="#c0c0c0">700 k</text>
<text x="164.58" y="235.30" font-size="20.80" letter-spacing="-0.442" fill="#c0c0c0" stroke="#c0c0c0">600 k</text>
<text x="164.58" y="265.30" font-size="20.80" letter-spacing="-0.442" fill="#c0c0c0" stroke="#c0c0c0">500 k</text>
<text x="164.58" y="295.30" font-size="20.80" letter-spacing="-0.442" fill="#c0c0c0" stroke="#c0c0c0">400 k</text>
<text x="164.58" y="325.30" font-size="20.80" letter-spacing="-0.442" fill="#c0c0c0" stroke="#c0c0c0">300 k</text>
<text x="164.58" y="355.30" font-size="20.80" letter-spacing="-0.442" fill="#c0c0c0" stroke="#c0c0c0">200 k</text>
<text x="164.58" y="385.30" font-size="20.80" letter-spacing="-0.442" fill="#c0c0c0" stroke="#c0c0c0">100 k</text>
<text x="188.66" y="415.30" font-size="20.80" letter-spacing="-0.442" fill="#c0c0c0" stroke="#c0c0c0">0  </text>
<text x="340.68" y="432.90" font-size="20.80" letter-spacing="-0.442" fill="#c0c0c0" stroke="#c0c0c0">06:00</text>
<text x="504.68" y="432.90" font-size="20.80" letter-spacing="-0.442" fill="#c0c0c0" stroke="#c0c0c0">12:00</text>
<text x="666.68" y="432.90" font-size="20.80" letter-spacing="-0.442" fill="#c0c0c0" stroke="#c0c0c0">18:00</text>
<text x="828.68" y="432.90" font-size="20.80" letter-spacing="-0.442" fill="#c0c0c0" stroke="#c0c0c0">00:00</text>
<rect x="132" y="447.7" width="16.5" height="16.6" fill="#808080"/>
<rect x="134" y="450" width="12.6" height="12.5" fill="#FFA500"/>
<text x="156.78" y="462.20" font-size="20.80" letter-spacing="-0.442" fill="#c0c0c0" stroke="#c0c0c0">master</text>
<text x="424.78" y="462.20" font-size="20.80" letter-spacing="-0.442" fill="#c0c0c0" stroke="#c0c0c0">Cur:  0.6M</text>
<text x="596.58" y="462.20" font-size="20.80" letter-spacing="-0.442" fill="#c0c0c0" stroke="#c0c0c0">Min:  0.0M</text>
<text x="768.38" y="462.20" font-size="20.80" letter-spacing="-0.442" fill="#c0c0c0" stroke="#c0c0c0">Max:  3.1M</text>
<rect x="132" y="471.7" width="16.5" height="16.6" fill="#808080"/>
<rect x="134" y="474" width="12.6" height="12.5" fill="#44EEEE"/>
<text x="156.78" y="486.20" font-size="20.80" letter-spacing="-0.442" fill="#c0c0c0" stroke="#c0c0c0">Dovecot</text>
<text x="424.78" y="486.20" font-size="20.80" letter-spacing="-0.442" fill="#c0c0c0" stroke="#c0c0c0">Cur:  0.0M</text>
<text x="596.58" y="486.20" font-size="20.80" letter-spacing="-0.442" fill="#c0c0c0" stroke="#c0c0c0">Min:  0.0M</text>
<text x="768.38" y="486.20" font-size="20.80" letter-spacing="-0.442" fill="#c0c0c0" stroke="#c0c0c0">Max:  0.0M</text>
<rect x="132" y="495.7" width="16.5" height="16.6" fill="#808080"/>
<rect x="134" y="498" width="12.6" height="12.5" fill="#44EE44"/>
<text x="156.78" y="510.20" font-size="20.80" letter-spacing="-0.442" fill="#c0c0c0" stroke="#c0c0c0">sendmail</text>
<text x="424.78" y="510.20" font-size="20.80" letter-spacing="-0.442" fill="#c0c0c0" stroke="#c0c0c0">Cur:  0.0M</text>
<text x="596.58" y="510.20" font-size="20.80" letter-spacing="-0.442" fill="#c0c0c0" stroke="#c0c0c0">Min:  0.0M</text>
<text x="768.38" y="510.20" font-size="20.80" letter-spacing="-0.442" fill="#c0c0c0" stroke="#c0c0c0">Max:  0.0M</text>
</g>
<g opacity=".685">
<rect x="1725" y="2" width="150" height="134.8" rx="6.5" fill="#404352"/>
<path d="M1770.60 99.85A17.85 17.85 0 0 1 1767.56 64.41A12.19 12.19 0 0 1 1787.53 53.55A21.11 21.11 0 1 1 1828.12 65.16A17.45 17.45 0 1 1 1831.40 99.75Z" fill="#f8ffff" stroke="#0aaedc" stroke-width="2.9" stroke-linejoin="miter"/>
</g>
</svg>
<div id="sb"></div><div id="th"></div>
</body></html>
